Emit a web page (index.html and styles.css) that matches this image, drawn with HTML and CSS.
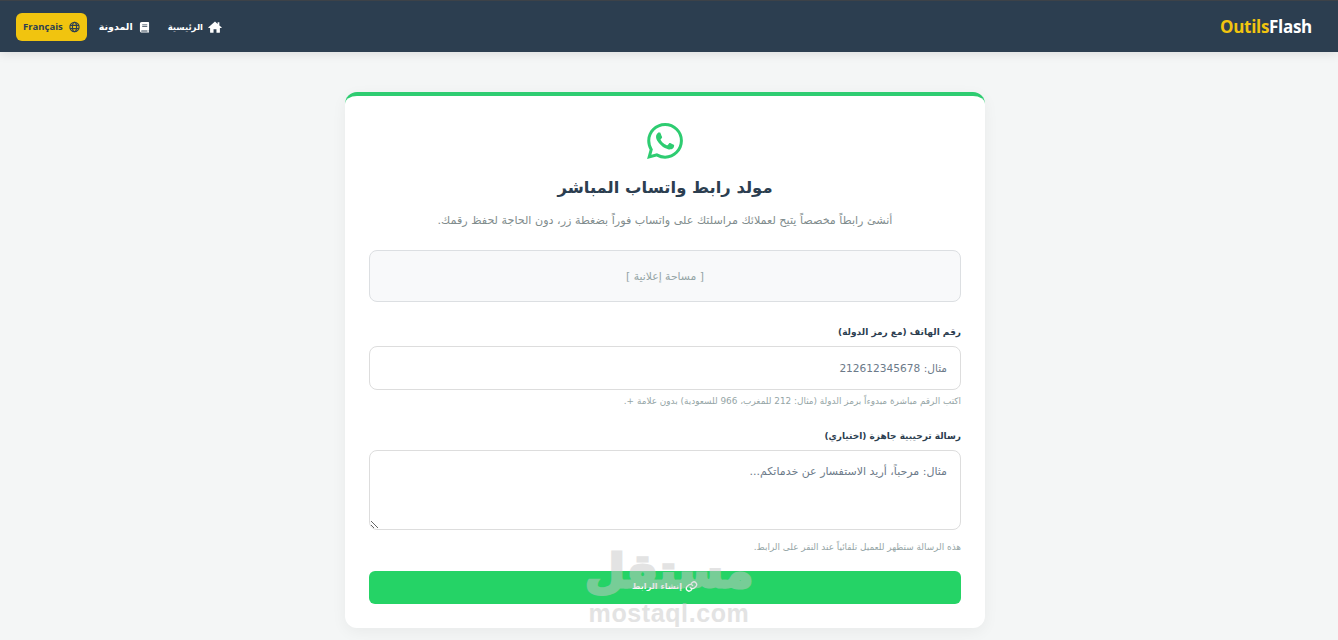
FILE: index.html
```html
<!DOCTYPE html>
<html lang="ar" dir="rtl">
<head>
    <meta charset="UTF-8">
    <meta name="viewport" content="width=device-width, initial-scale=1.0">
    <title>مولد رابط واتساب المباشر</title>
    <link rel="stylesheet" href="styles.css">
</head>
<body>
    <header class="navbar">
        <a class="logo" href="#"><span class="logo-accent">Outils</span>Flash</a>
        <nav class="nav-links">
            <a class="nav-link nav-link-home" href="#">
                <svg class="nav-icon" viewBox="0 0 24 24" fill="currentColor"><path d="M12 2.6 0.8 12.4c-.5.5-.2 1.2.4 1.2H3.600V21c0 .6.4 1 1 1h4.900v-6.200h5V22h4.900c.6 0 1-.4 1-1v-7.400h2.400c.6 0 .9-.7.4-1.200L19.500 9.400V4h-3v2.800z"/></svg>
                الرئيسية
            </a>
            <a class="nav-link nav-link-blog" href="#">
                <svg class="nav-icon nav-icon-small" viewBox="0 0 24 24" fill="currentColor"><path d="M6 1h14c1 0 2 1 2 2v15c0 .7-.4 1.200-1 1.500v2c.6.200 1 .6 1 1.200 0 .7-.4 1.300-1.200 1.300H6c-2.500 0-4-1.500-4-4V5c0-2.500 1.500-4 4-4zm1 5.500v1.500h11V6.500zm0 3.500v1.500h11V10zM6 19.500c-.9 0-1.400.5-1.400 1.100 0 .7.5 1.200 1.400 1.200h12.500v-2.300z"/></svg>
                المدونة
            </a>
            <a class="lang-btn" href="#">
                <svg class="nav-icon nav-icon-small" viewBox="0 0 24 24" fill="none" stroke="currentColor" stroke-width="2.600"><circle cx="12" cy="12" r="10"/><ellipse cx="12" cy="12" rx="4.500" ry="10"/><path d="M2 8.500h20M2 15.500h20"/></svg>
                <span dir="ltr">Français</span>
            </a>
        </nav>
    </header>

    <main class="page">
        <section class="card">
            <svg class="wa-icon" viewBox="0 0 24 24" fill="currentColor"><path d="M17.472 14.382c-.297-.149-1.758-.867-2.030-.967-.273-.099-.471-.148-.670.150-.197.297-.767.966-.940 1.164-.173.199-.347.223-.644.075-.297-.150-1.255-.463-2.390-1.475-.883-.788-1.480-1.761-1.653-2.059-.173-.297-.018-.458.130-.606.134-.133.298-.347.446-.520.149-.174.198-.298.298-.497.099-.198.050-.371-.025-.520-.075-.149-.669-1.612-.916-2.207-.242-.579-.487-.500-.669-.510-.173-.008-.371-.010-.570-.010-.198 0-.520.074-.792.372-.272.297-1.040 1.016-1.040 2.479 0 1.462 1.065 2.875 1.213 3.074.149.198 2.096 3.200 5.077 4.487.709.306 1.262.489 1.694.625.712.227 1.360.195 1.871.118.571-.085 1.758-.719 2.006-1.413.248-.694.248-1.289.173-1.413-.074-.124-.272-.198-.570-.347m-5.421 7.403h-.004a9.870 9.870 0 01-5.031-1.378l-.361-.214-3.741.982.998-3.648-.235-.374a9.860 9.860 0 01-1.510-5.260c.001-5.450 4.436-9.884 9.888-9.884 2.640 0 5.122 1.030 6.988 2.898a9.825 9.825 0 012.893 6.994c-.003 5.450-4.437 9.884-9.885 9.884m8.413-18.297A11.815 11.815 0 0012.050 0C5.495 0 .160 5.335.157 11.892c0 2.096.547 4.142 1.588 5.945L.057 24l6.305-1.654a11.882 11.882 0 005.683 1.448h.005c6.554 0 11.890-5.335 11.893-11.893a11.821 11.821 0 00-3.480-8.413z"/></svg>
            <h1 class="card-title">مولد رابط واتساب المباشر</h1>
            <p class="card-desc">أنشئ رابطاً مخصصاً يتيح لعملائك مراسلتك على واتساب فوراً بضغطة زر، دون الحاجة لحفظ رقمك.</p>

            <div class="ad-box">[ مساحة إعلانية ]</div>

            <form class="form">
                <div class="field">
                    <label class="field-label" for="phone">رقم الهاتف (مع رمز الدولة)</label>
                    <input class="field-input field-phone" id="phone" type="text" placeholder="مثال: 212612345678">
                    <small class="field-hint">اكتب الرقم مباشرة مبدوءاً برمز الدولة (مثال: 212 للمغرب، 966 للسعودية) بدون علامة +.</small>
                </div>
                <div class="field field-last">
                    <label class="field-label" for="message">رسالة ترحيبية جاهزة (اختياري)</label>
                    <textarea class="field-input field-textarea" id="message" placeholder="مثال: مرحباً، أريد الاستفسار عن خدماتكم..."></textarea>
                    <small class="field-hint">هذه الرسالة ستظهر للعميل تلقائياً عند النقر على الرابط.</small>
                </div>
                <button class="submit-btn" type="button">
                    <svg class="btn-icon" viewBox="0 0 24 24" fill="none" stroke="currentColor" stroke-width="2.500" stroke-linecap="round"><path d="M10 14a5 5 0 0 0 7.500.5l3-3a5 5 0 0 0-7-7l-1.700 1.700"/><path d="M14 10a5 5 0 0 0-7.500-.5l-3 3a5 5 0 0 0 7 7l1.700-1.700"/></svg>
                    إنشاء الرابط
                </button>
            </form>
        </section>
    </main>

    <div class="watermark">
        <span class="watermark-ar">مستقل</span>
        <span class="watermark-en">mostaql.com</span>
    </div>
</body>
</html>
```

FILE: styles.css
```css
* {
    box-sizing: border-box;
}

body {
    font-family: "DejaVu Sans", "Noto Sans", sans-serif;
    margin: 0;
    background-color: #f4f6f6;
    color: #2c3e50;
    height: 640px;
    overflow: hidden;
}

.navbar {
    height: 52px;
    background: #2c3e50;
    border-top: 1px solid #3d4248;
    box-shadow: 0 2px 10px rgba(0,0,0,0.1);
    display: flex;
    align-items: center;
    justify-content: space-between;
    padding: 0 26px 0 16px;
}

.logo {
    font-family: "Open Sans", sans-serif;
    font-size: 17px;
    font-weight: 700;
    color: #fff;
    text-decoration: none;
    letter-spacing: -0.3px;
}

.logo-accent {
    color: #f1c40f;
}

.nav-links {
    display: flex;
    align-items: center;
    gap: 12px;
}

.nav-link {
    display: inline-flex;
    align-items: center;
    gap: 6px;
    color: #fff;
    font-size: 9.500px;
    font-weight: 700;
    text-decoration: none;
}

.nav-link-home {
    gap: 5px;
    font-size: 8.500px;
}

.nav-link-blog {
    margin-right: 6px;
}

.nav-icon {
    width: 14px;
    height: 14px;
}

.nav-icon-small {
    width: 11px;
    height: 12px;
}

.lang-btn {
    display: inline-flex;
    align-items: center;
    gap: 6px;
    height: 28px;
    padding: 0 7px;
    background: #f1c40f;
    border-radius: 6px;
    color: #2c3e50;
    font-family: "Open Sans", sans-serif;
    font-size: 9.500px;
    font-weight: 700;
    text-decoration: none;
}

.page {
    display: flex;
    justify-content: center;
    padding: 40px 8px 0 0;
}

.card {
    width: 640px;
    height: 536px;
    background: #fff;
    border-top: 4px solid #2ecc71;
    border-radius: 12px;
    box-shadow: 0 4px 15px rgba(0,0,0,0.05);
    padding: 24px;
    display: flex;
    flex-direction: column;
}

.wa-icon {
    width: 36px;
    height: 36px;
    color: #2ecc71;
    align-self: center;
    margin-top: 3px;
}

.card-title {
    margin: 16px 0 0;
    font-size: 16.400px;
    line-height: 26px;
    font-weight: 700;
    text-align: center;
}

.card-desc {
    margin: 10px 0 0;
    font-size: 11.150px;
    line-height: 20px;
    color: #7f8c8d;
    text-align: center;
}

.ad-box {
    height: 52px;
    margin-top: 19px;
    background: #f8f9fa;
    border: 1px solid #dcdfe2;
    border-radius: 8px;
    display: flex;
    align-items: center;
    justify-content: center;
    font-size: 10.800px;
    color: #95a5a6;
}

.form {
    display: flex;
    flex-direction: column;
    margin-top: 22px;
}

.field {
    display: flex;
    flex-direction: column;
    margin-bottom: 21px;
}

.field-last {
    margin-bottom: 18px;
}

.field-label {
    font-size: 9px;
    line-height: 16px;
    font-weight: 700;
    margin-bottom: 6px;
}

.field-input {
    width: 100%;
    height: 44px;
    border: 1px solid #dddddd;
    border-radius: 8px;
    padding: 0 13px;
    font-family: inherit;
    font-size: 11px;
    color: #2c3e50;
    background: #fff;
}

.field-phone {
    font-size: 10.600px;
}

.field-input::placeholder {
    color: #6c7a89;
    opacity: 1;
}

.field-textarea {
    height: 80px;
    margin-bottom: 6px;
    padding-top: 12px;
    line-height: 18px;
}

.field-hint {
    margin-top: 5px;
    font-size: 8.900px;
    line-height: 12px;
    color: #95a5a6;
}

.submit-btn {
    height: 33px;
    border: 0;
    border-radius: 6px;
    padding: 0 0 3px;
    background: #25d366;
    color: #fff;
    font-family: inherit;
    font-size: 8.200px;
    font-weight: 700;
    display: flex;
    align-items: center;
    justify-content: center;
    gap: 3px;
}

.btn-icon {
    width: 13px;
    height: 13px;
}

/* mostaql stamp sits over the page */
.watermark {
    position: absolute;
    left: 588px;
    top: 543px;
    width: 162px;
    display: flex;
    flex-direction: column;
    align-items: center;
    color: #c8c8c8;
    font-weight: 700;
    opacity: 0.5;
    pointer-events: none;
}

.watermark-ar {
    font-size: 46px;
    line-height: 57px;
    -webkit-text-stroke: 3px #c8c8c8;
}

.watermark-en {
    font-family: "Liberation Sans", sans-serif;
    font-size: 25px;
    line-height: 26px;
    letter-spacing: 0.6px;
}
```
